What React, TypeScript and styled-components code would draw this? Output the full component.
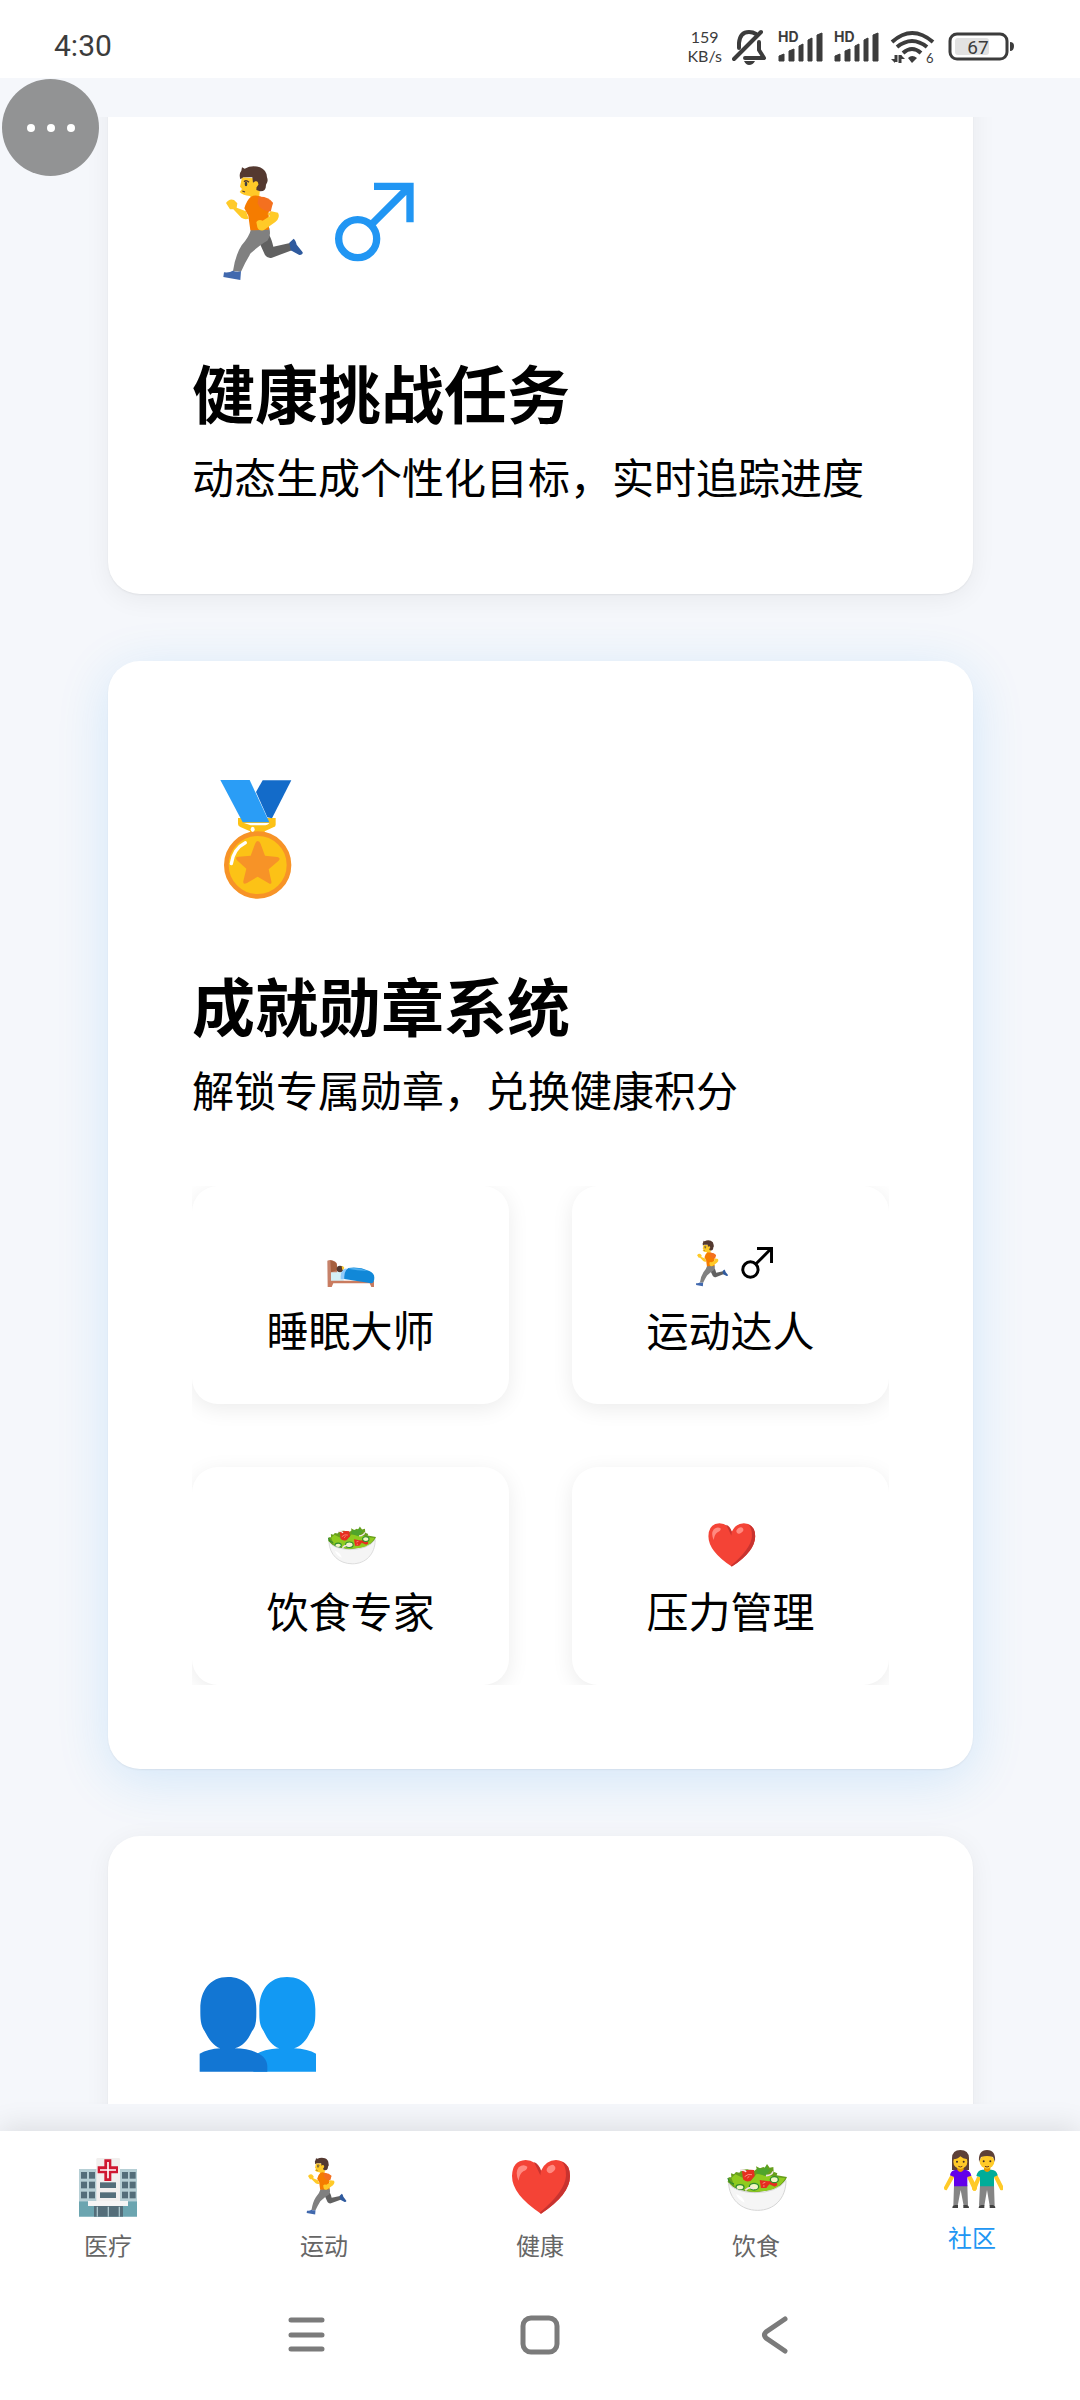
import React, { useLayoutEffect, useRef } from 'react';
import styled, { createGlobalStyle } from 'styled-components';

const GlobalStyle = createGlobalStyle`
  * { box-sizing: border-box; }
  html, body { margin: 0; background: #f5f7fb; }
  body { font-family: "Noto Sans", "Noto Sans CJK SC", sans-serif; color: #000; }
  h2, p { margin: 0; }
  button { border: 0; padding: 0; background: none; font: inherit; cursor: pointer; }
`;

const Screen = styled.div`
  position: relative;
  display: flex;
  flex-direction: column;
  height: 100vh;
  background: #f5f7fb;
`;

const StatusBar = styled.header`
  display: flex;
  align-items: center;
  justify-content: space-between;
  height: 78px;
  padding: 14px 66px 0 54px;
  background: #fff;
  color: #3c3c3c;
`;

const Clock = styled.time`
  font: 400 30px/36px Roboto, sans-serif;
`;

const StatusIcons = styled.div`
  display: flex;
  align-items: center;
  gap: 10px;
`;

const NetRate = styled.div`
  font: 400 16px/19px Lato, sans-serif;
  text-align: center;
`;

const Feed = styled.main`
  position: relative;
  z-index: 1;
  flex: 1;
  min-height: 0;
  margin: 39px 0 27px;
  padding: 0 107px 0 108px;
  overflow-x: hidden;
  overflow-y: auto;
  scrollbar-width: none;
`;

const CardList = styled.div`
  display: flex;
  flex-direction: column;
  gap: 67px;
  padding-bottom: 67px;
`;

const Card = styled.section<{ $active?: boolean }>`
  padding: 84px;
  border-radius: 32px;
  background: #fff;
  box-shadow: ${(p) =>
    p.$active
      ? '0 1px 2px rgba(0, 0, 0, 0.06), 0 10px 52px rgba(33, 150, 243, 0.16)'
      : '0 1px 2px rgba(0, 0, 0, 0.06), 0 5px 26px rgba(0, 0, 0, 0.06)'};
`;

const CardIcon = styled.div`
  display: flex;
  align-items: center;
  height: 186px;
  padding-left: 4px;
  color: #2196f3;
`;

const CardTitle = styled.h2`
  margin-top: 30px;
  font-size: 63px;
  line-height: 92px;
  font-weight: 700;
`;

const CardText = styled.p`
  margin-top: 6px;
  font-size: 42px;
  line-height: 64px;
`;

const BadgeGrid = styled.div`
  display: grid;
  grid-template-columns: 1fr 1fr;
  gap: 63px;
  margin-top: 63px;
  overflow: hidden;
`;

const Badge = styled.div`
  display: flex;
  flex-direction: column;
  align-items: center;
  padding: 42px 0;
  border-radius: 26px;
  background: #fff;
  box-shadow: 0 5px 21px rgba(0, 0, 0, 0.08);
`;

const BadgeIcon = styled.div`
  display: flex;
  align-items: center;
  height: 72px;
`;

const BadgeName = styled.span`
  font-size: 42px;
  line-height: 62px;
`;

const TabBar = styled.nav`
  display: flex;
  padding: 25px 0 8px;
  background: #fff;
  box-shadow: 0 -5px 26px rgba(0, 0, 0, 0.1);
`;

const Tab = styled.a<{ $active?: boolean }>`
  display: flex;
  flex: 1;
  flex-direction: column;
  align-items: center;
  gap: 12px;
  font-size: 24px;
  line-height: 32px;
  text-decoration: none;
  color: ${(p) => (p.$active ? '#2196f3' : '#666')};
  transform: ${(p) => (p.$active ? 'translateY(-8px)' : 'none')};
`;

const SystemBar = styled.footer`
  display: flex;
  align-items: center;
  justify-content: center;
  gap: 170px;
  height: 130px;
  background: #fff;
`;

const SystemButton = styled.button`
  display: flex;
  width: 64px;
  height: 64px;
  align-items: center;
  justify-content: center;
`;

const FloatingButton = styled.button`
  position: absolute;
  z-index: 2;
  top: 79px;
  left: 2px;
  display: flex;
  align-items: center;
  justify-content: center;
  gap: 12px;
  width: 97px;
  height: 97px;
  border-radius: 50%;
  background: #929394;
`;

const Dot = styled.span`
  width: 8px;
  height: 8px;
  border-radius: 50%;
  background: #fff;
`;

type IconProps = { size: number };

const Runner = ({ size }: IconProps) => (
  <svg width={size} height={size} viewBox="48 69 372 372" aria-hidden="true">
    <path d="M240 312 L268 286 Q274 296 280 320 L330 309 L338 330 L276 353 Q262 356 255 345 Z" fill="#616161" />
    <path d="M328 308 L341 296 Q347 300 350 314 L368 337 Q370 344 358 345 L332 331 Z" fill="#2f5a9e" />
    <path d="M213 268 L268 264 Q274 290 262 302 Q240 314 212 340 Q196 366 183 395 L159 393 Q166 345 185 316 Q208 290 213 268Z" fill="#808080" />
    <path d="M132 397 Q150 399 158 392 Q170 397 183 394 L181 420 L130 411 Z" fill="#4169ae" />
    <path d="M138 189 Q148 174 162 180 L172 190 L170 203 L198 214 L206 236 Q194 240 184 233 L160 208 L150 208 Z" fill="#ffca28" />
    <path d="M186 112 L180 140 L186 147 L179 156 Q188 166 210 168 L214 174 L238 168 L240 148 L237 116 Z" fill="#ffca28" />
    <path d="M213 170 Q224 164 240 169 L278 190 L266 216 L267 269 L211 271 L205 227 L193 205 Q200 180 213 170Z" fill="#f57c00" />
    <path d="M235 171 Q262 168 279 188 L272 215 Q240 212 233 190Z" fill="#f4701f" />
    <path d="M274 214 L294 218 Q302 232 286 246 L252 270 Q238 276 232 262 L229 246 Q236 236 248 242 L270 228 L262 222 Z" fill="#ffca28" />
    <path d="M181 118 Q176 101 184 92 L186 82 L194 86 Q216 74 240 82 Q260 90 261 112 Q266 124 258 134 Q258 155 240 154 L229 150 Q230 138 228 124 L219 128 L217 112 L190 112 Z" fill="#543930" />
    <path d="M221 127 Q234 118 235 133 Q232 144 223 142Z" fill="#ffca28" />
    <ellipse cx="198" cy="132" rx="4" ry="7" fill="#404040" />
    <path d="M192 125 Q199 119 207 127 M187 153 L195 156" fill="none" stroke="#543930" strokeWidth="4" />
  </svg>
);

const MaleSign = ({ size }: IconProps) => (
  <svg height={size} width={Math.round((size * 309) / 372)} viewBox="420 69 309 372" aria-hidden="true">
    <g fill="none" stroke="currentColor" strokeWidth="22">
      <circle cx="533" cy="296" r="57" />
      <path d="M573 255 L686 142 M582 139 H690 V247" />
    </g>
  </svg>
);

const Medal = ({ size }: IconProps) => (
  <svg width={size} height={size} viewBox="48 78 372 372" aria-hidden="true">
    <path d="M174 204 H287 V224 Q287 230 280 232 L254 244 V252 H210 V244 L181 231 Q174 228 174 222Z" fill="#fcc216" />
    <path d="M192 219 H268 Q264 226 250 226 H212 Z" fill="#fff" />
    <path d="M248 91 H334 L276 205 L262 202 L228 126Z" fill="#136bc9" />
    <path d="M121 90 H209 L268 217 H188Z" fill="#2a9df6" />
    <circle cx="233" cy="345" r="94" fill="#fcc216" stroke="#f79327" strokeWidth="14" />
    <path d="M233 273 Q239 273 242 282 L255 317 L292 321 Q304 324 295 333 L266 358 L274 394 Q276 406 265 399 L233 380 L201 399 Q188 406 190 393 L199 356 L171 331 Q163 320 176 320 L212 317 L225 282 Q228 273 233 273Z" fill="#f79327" />
    <path d="M196 278 Q160 296 154 341" fill="none" stroke="#fff" strokeWidth="10" strokeLinecap="round" />
    <ellipse cx="218" cy="238" rx="6" ry="8" fill="#fff" />
  </svg>
);

const People = ({ size }: IconProps) => (
  <svg width={size} height={size} viewBox="408 396 372 372" aria-hidden="true">
    <path d="M681 474 C735 474 766 514 766 570 C766 600 767 620 751 638 C740 664 722 683 702 688 Q744 690 768 704 V758 H580 V710 Q610 690 658 688 C638 682 622 662 612 638 C597 618 598 600 598 570 C598 514 627 474 681 474Z" fill="#1299f3" />
    <path d="M504 474 C559 474 589 514 589 570 C589 600 590 620 575 638 C564 664 546 683 524 688 C576 689 622 706 622 742 V758 H419 V704 Q444 690 481 688 C462 682 446 662 435 638 C421 618 421 600 421 570 C421 514 450 474 504 474Z" fill="#1276d3" />
  </svg>
);

const Bed = ({ size }: IconProps) => (
  <svg width={size} height={size} viewBox="437 210 150 150" aria-hidden="true">
    <path d="M450 304 H490 V336 H450Z" fill="#d5f1f7" />
    <path d="M441 275 Q452 270 465 278 Q471 281 470 290 V310 H452 V354 H442Z" fill="#c6826a" />
    <path d="M450 274 Q468 277 470 290 V304 L452 310Z" fill="#a65f3e" />
    <path d="M450 335 H581 V354 H573 L568 343 H459 L454 354 H444 V335Z" fill="#c97b5f" />
    <circle cx="479" cy="300" r="10" fill="#543930" />
    <path d="M484 292 Q492 291 492 298 L486 304Z" fill="#ffca28" />
    <path d="M481 322 Q482 301 498 298 L508 330 L481 331Z" fill="#90caf9" />
    <path d="M492 330 Q490 306 504 297 Q535 292 567 306 Q582 312 582 326 Q582 342 572 343 Z" fill="#1188d8" />
    <path d="M502 299 Q530 292 563 306 Q530 305 502 299Z" fill="#4fb0f0" />
  </svg>
);

const Salad = ({ size }: IconProps) => (
  <svg width={size} height={size} viewBox="855 108 186 186" aria-hidden="true">
    <path d="M863 186 L866 172 L874 172 L873 160 L882 163 L888 156 L898 158 L905 149 L922 148 L942 153 L950 147 L948 139 L960 145 L970 141 L975 143 L981 132 L989 143 L1000 141 L1001 155 L1012 160 L1010 166 L1041 171 Q1034 190 1014 206 L940 219 L884 206Z" fill="#689f1c" />
    <path d="M874 174 L886 163 L905 172 L930 184 L950 162 L978 164 L1012 172 L1036 175 Q1020 200 1000 210 L940 216 L885 202 Z" fill="#8fcb1f" />
    <path d="M951 145 L972 146 L980 136 L984 148 L994 146 L976 168 L950 160Z" fill="#4fa52c" />
    <path d="M906 154 Q925 147 942 150 L944 168 L932 182 Q918 188 909 178Z" fill="#e62e20" />
    <path d="M959 180 L985 184 L1010 180 L1012 196 L1004 200 L988 193 L979 204 L963 204Z" fill="#e62e20" />
    <path d="M914 170 Q924 160 936 164 M922 174 L928 169 M968 190 L976 187 M969 198 H974" stroke="#ff8f82" strokeWidth="3" fill="none" />
    <ellipse cx="1003" cy="179" rx="12" ry="9" fill="#f3f7c4" stroke="#2f8d2d" strokeWidth="4" />
    <ellipse cx="900" cy="202" rx="12" ry="8" fill="#f3f7c4" stroke="#2f8d2d" strokeWidth="4" />
    <ellipse cx="942" cy="200" rx="14" ry="10" fill="#f3f7c4" stroke="#2f8d2d" strokeWidth="4" />
    <path d="M900 151 Q914 148 918 156 M978 167 Q996 166 999 154 M916 211 Q928 198 942 206" stroke="#f4e2e6" strokeWidth="5" fill="none" />
    <path d="M864 174 Q866 188 882 192" stroke="#2f8d2d" strokeWidth="4" fill="none" />
    <path d="M866 190 Q884 216 945 218 Q1010 218 1038 181 C1038 236 1002 271 953 271 C902 271 868 236 866 190Z" fill="#f5f5f5" stroke="#d5d5d5" strokeWidth="3" />
    <path d="M888 222 Q894 240 914 248 Q909 229 888 222Z" fill="#fff" />
  </svg>
);

const Heart = ({ size }: IconProps) => (
  <svg width={size} height={size} viewBox="207 108 186 186" aria-hidden="true">
    <path d="M303 281 Q216 224 216 168 Q217 122 257 120 Q287 120 303 152 Q318 120 348 120 Q389 123 390 168 Q390 224 303 281Z" fill="#f44336" />
    <path d="M364 124 Q390 134 390 168 Q390 224 303 281 L299 278 Q375 214 378 168 Q379 138 364 124Z" fill="#c8332f" />
    <path d="M303 152 Q297 132 282 126 Q291 144 301 166Z" fill="#c8332f" />
    <path d="M236 182 Q224 158 236 142 Q250 130 262 140 Q262 149 250 154 Q238 162 236 182Z" fill="#ff8a80" />
    <ellipse cx="333" cy="147" rx="14" ry="10" transform="rotate(-38 333 147)" fill="#ff8a80" />
  </svg>
);

const Hospital = ({ size }: IconProps) => (
  <svg width={size} height={size} viewBox="51 108 186 186" aria-hidden="true">
    <path d="M57 147 H231 V244 H57Z" fill="#b6cfd5" />
    <path d="M57 244 H231 V290 H57Z" fill="#6ba5b0" />
    <path d="M109 118 Q109 114 113 114 H176 Q180 114 180 118 V244 H109Z" fill="#f1efee" />
    <g fill="#546e7a">
      {[156, 185, 215].map((y) =>
        [63, 87, 186, 209].map((x) => <rect key={`${x}-${y}`} x={x} y={y} width="18" height="20" />),
      )}
      <rect x="120" y="187" width="48" height="17" />
      <rect x="120" y="217" width="48" height="17" />
      <rect x="102" y="256" width="87" height="34" />
    </g>
    <path d="M112 260 V290 M145 260 V290 M178 260 V290" stroke="#a9c4cb" strokeWidth="4" />
    <rect x="84" y="243" width="120" height="15" fill="#f5f5f5" />
    <path d="M133 118 H154 V139 H174 V160 H154 V183 H133 V160 H113 V139 H133Z" fill="#cf1730" />
    <path d="M144 126 V175 M120 150 H168" stroke="#fff" strokeWidth="5" />
  </svg>
);

const Couple = ({ size }: IconProps) => (
  <svg width={size} height={size} viewBox="303 204 186 186" aria-hidden="true">
    <path d="M336 270 V234 Q337 210 361 210 Q386 210 387 234 V270Z" fill="#5d4037" />
    <path d="M332 284 L343 291 L320 331 Q311 332 312 322Z M380 289 L391 282 L411 320 Q412 334 400 332Z" fill="#ffca28" />
    <path d="M412 289 L423 292 L407 332 Q396 334 396 324Z M461 290 L471 283 L491 322 Q491 333 481 330Z" fill="#ffca28" />
    <path d="M342 316 H382 L384 377 H371 L362 330 L353 377 H340Z M420 316 H462 L464 377 H449 L441 330 L433 377 H417Z" fill="#858585" />
    <path d="M337 384 Q337 375 346 375 H354 V384Z M370 384 V375 H379 Q387 376 387 384Z M416 384 Q416 375 425 375 H433 V384Z M449 384 V375 H458 Q466 376 466 384Z" fill="#424242" />
    <path d="M330 286 Q332 270 350 269 H374 Q391 270 394 287 L382 291 V319 H342 V291Z" fill="#6200ea" />
    <path d="M409 288 Q412 270 428 269 H454 Q470 270 473 286 L462 291 V319 H420 V291Z" fill="#00ad99" />
    <path d="M352 259 H371 V270 Q361 282 352 270Z M432 259 H451 V270 Q441 282 432 270Z" fill="#e59a00" />
    <ellipse cx="361" cy="245" rx="21" ry="22" fill="#ffca28" />
    <ellipse cx="441" cy="245" rx="22" ry="21" fill="#ffca28" />
    <path d="M340 238 Q336 213 361 213 Q386 213 383 238 Q368 236 361 229 Q353 238 340 238Z" fill="#5d4037" />
    <path d="M417 246 Q414 210 441 210 Q468 210 465 246 L459 231 Q441 225 423 231Z" fill="#5d4037" />
    <path d="M355 259 Q361 263 367 259 M435 259 Q441 263 447 259" fill="none" stroke="#6d3b1d" strokeWidth="3" />
    <g fill="#3e2c27">
      <circle cx="351" cy="245" r="3" />
      <circle cx="371" cy="245" r="3" />
      <circle cx="431" cy="244" r="3" />
      <circle cx="451" cy="244" r="3" />
    </g>
  </svg>
);

const MutedBell = () => (
  <svg width="36" height="40" viewBox="0 -2 36 40" aria-hidden="true">
    <g fill="none" stroke="#3c3c3c" strokeWidth="4" strokeLinecap="round">
      <path d="M7 20 V15 Q8 4 17 4 Q21 4 24 6" />
      <path d="M2 31 L29 4" />
      <path d="M27 14 V22 L32 30 H13" strokeLinejoin="round" />
    </g>
    <path d="M12 33 H23 Q21 37 17 37 Q14 37 12 33Z" fill="#3c3c3c" />
  </svg>
);

const Signal = () => (
  <svg width="46" height="44" viewBox="0 -4 46 44" aria-hidden="true">
    <text x="0" y="14" fontFamily="Inter, sans-serif" fontSize="14" fontWeight="700" fill="#3c3c3c">HD</text>
    <path d="M1 33 V28 L6 26 V33Z M11 33 V23 L16 21 V33Z M21 33 V18 L25 16 V33Z M30 33 V12 L34 10 V33Z M39 33 V7 L44 5 V33Z" fill="#3c3c3c" stroke="#3c3c3c" strokeLinejoin="round" />
  </svg>
);

const Wifi = () => (
  <svg width="48" height="44" viewBox="0 -4 48 44" aria-hidden="true">
    <g fill="none" stroke="#3c3c3c" strokeWidth="4">
      <path d="M2 14 Q22 -4 43 14" />
      <path d="M7 19 Q22 7 37 19" />
      <path d="M13 25 Q22 17 31 25" />
    </g>
    <path d="M18 30 Q22 26 27 30 L22 35Z" fill="#3c3c3c" />
    <path d="M6 27 V34 M10 27 V35" stroke="#3c3c3c" strokeWidth="3" />
    <path d="M1 31 H5 V35Z M11 27 L15 31 H11Z" fill="#3c3c3c" />
    <text x="36" y="35" fontFamily="Lato, sans-serif" fontSize="13" fill="#3c3c3c">6</text>
  </svg>
);

const Battery = () => (
  <svg width="66" height="40" viewBox="0 -2 66 40" aria-hidden="true">
    <rect x="2" y="6" width="57" height="25" rx="7" fill="#fff" stroke="#3c3c3c" strokeWidth="3" />
    <rect x="7" y="10" width="34" height="17" rx="3" fill="#e2e2e2" />
    <path d="M62 14 Q66 14 66 18 Q66 23 62 23Z" fill="#3c3c3c" />
    <text x="30" y="26" textAnchor="middle" fontFamily="Roboto, sans-serif" fontSize="19" fill="#3c3c3c">67</text>
  </svg>
);

const badges = [
  { name: '睡眠大师', icon: <Bed size={50} /> },
  { name: '运动达人', icon: <><Runner size={50} /><MaleSign size={50} /></> },
  { name: '饮食专家', icon: <Salad size={50} /> },
  { name: '压力管理', icon: <Heart size={50} /> },
];

const tabs = [
  { name: '医疗', Icon: Hospital },
  { name: '运动', Icon: Runner },
  { name: '健康', Icon: Heart },
  { name: '饮食', Icon: Salad },
  { name: '社区', Icon: Couple },
];

const FEED_OFFSET = 69;

export default function App() {
  const feed = useRef<HTMLElement>(null);

  useLayoutEffect(() => {
    if (feed.current) feed.current.scrollTop = FEED_OFFSET;
  }, []);

  return (
    <Screen>
      <GlobalStyle />
      <StatusBar>
        <Clock>4:30</Clock>
        <StatusIcons>
          <NetRate>159<br />KB/s</NetRate>
          <MutedBell />
          <Signal />
          <Signal />
          <Wifi />
          <Battery />
        </StatusIcons>
      </StatusBar>

      <Feed ref={feed}>
        <CardList>
          <Card>
            <CardIcon><Runner size={124} /><MaleSign size={124} /></CardIcon>
            <CardTitle>健康挑战任务</CardTitle>
            <CardText>动态生成个性化目标，实时追踪进度</CardText>
          </Card>
          <Card $active>
            <CardIcon><Medal size={124} /></CardIcon>
            <CardTitle>成就勋章系统</CardTitle>
            <CardText>解锁专属勋章，兑换健康积分</CardText>
            <BadgeGrid>
              {badges.map((b) => (
                <Badge key={b.name}>
                  <BadgeIcon>{b.icon}</BadgeIcon>
                  <BadgeName>{b.name}</BadgeName>
                </Badge>
              ))}
            </BadgeGrid>
          </Card>
          <Card>
            <CardIcon><People size={124} /></CardIcon>
          </Card>
        </CardList>
      </Feed>

      <TabBar>
        {tabs.map(({ name, Icon }) => (
          <Tab key={name} href="#" $active={name === '社区'}>
            <Icon size={62} />
            <span>{name}</span>
          </Tab>
        ))}
      </TabBar>

      <SystemBar>
        <SystemButton aria-label="菜单">
          <svg width="40" height="40" viewBox="0 0 40 40" fill="none" stroke="#7b7b7b" strokeWidth="5" strokeLinecap="round">
            <path d="M5 5 H36 M5 20 H36 M5 34 H36" />
          </svg>
        </SystemButton>
        <SystemButton aria-label="主页">
          <svg width="40" height="40" viewBox="0 0 40 40" fill="none" stroke="#7b7b7b" strokeWidth="5">
            <rect x="3" y="3" width="34" height="34" rx="8" />
          </svg>
        </SystemButton>
        <SystemButton aria-label="返回">
          <svg width="40" height="40" viewBox="0 0 40 40" fill="none" stroke="#7b7b7b" strokeWidth="5" strokeLinecap="round">
            <path d="M31 4 L12 17 Q9 20 12 23 L31 36" />
          </svg>
        </SystemButton>
      </SystemBar>

      <FloatingButton aria-label="更多">
        <Dot />
        <Dot />
        <Dot />
      </FloatingButton>
    </Screen>
  );
}
